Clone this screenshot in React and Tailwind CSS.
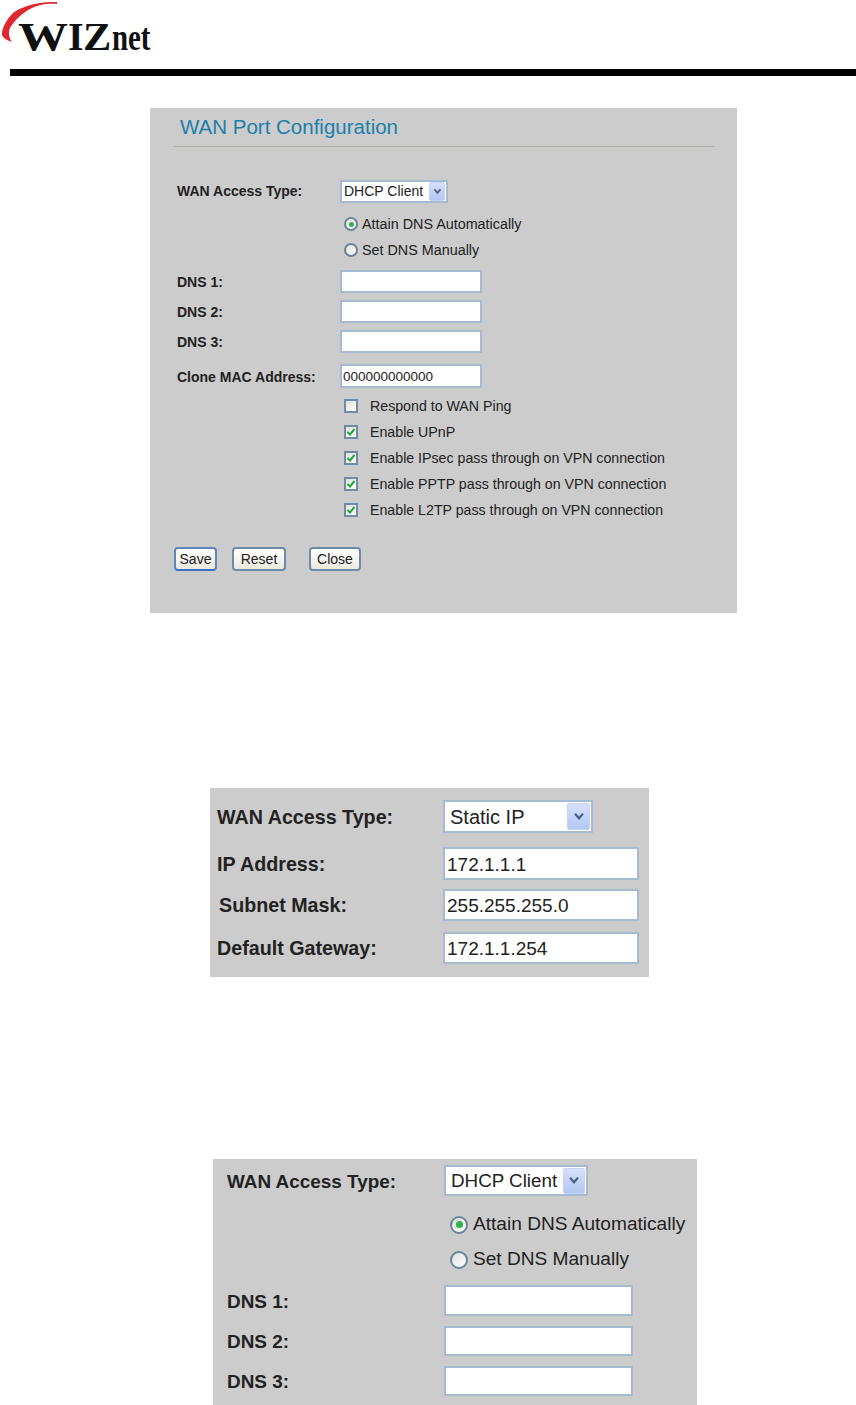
const sans = 'font-["Liberation_Sans",Arial,sans-serif]';

function Chevron({ box, icon }) {
  return (
    <div className={`${box} flex items-center justify-center rounded-[2px] bg-gradient-to-b from-[#d5e0fb] to-[#b3c7f5] border border-[#c5d3f5]`}>
      <svg viewBox="0 0 10 8" className={icon} fill="none" stroke="#4d6185" strokeWidth="2">
        <path d="M1.5 1.5 5 5.500 8.500 1.500" />
      </svg>
    </div>
  );
}

function SelectBox({ value, cls, box, icon, text }) {
  return (
    <div className={`${cls} flex items-center justify-between bg-white border-2 border-[#a6bbd2] pr-[1px]`}>
      <span className={text}>{value}</span>
      <Chevron box={box} icon={icon} />
    </div>
  );
}

function Radio({ checked, size, dot }) {
  return (
    <span className={`${size} flex-shrink-0 flex items-center justify-center rounded-full border-2 border-[#6a8499] bg-gradient-to-br from-[#dfdfdb] to-white`}>
      {checked && <span className={`${dot} rounded-full bg-[#2fb14a]`} />}
    </span>
  );
}

function Check({ checked }) {
  return (
    <span className="w-[14px] h-[14px] flex-shrink-0 flex items-center justify-center border-2 border-[#6f8ba5] bg-gradient-to-br from-[#e0e0da] to-white">
      {checked && (
        <svg viewBox="0 0 10 10" className="w-[10px] h-[10px]" fill="none" stroke="#22a83a" strokeWidth="2">
          <path d="M1.5 5 4 7.500 8.500 2" />
        </svg>
      )}
    </span>
  );
}

function Btn({ children, cls }) {
  return (
    <button className={`${cls} h-[24px] text-[14px] text-[#222] rounded-[4px] border-2 bg-gradient-to-b from-white to-[#ebe9df] flex items-center justify-center`}>
      {children}
    </button>
  );
}

function TextBox({ cls, value = '' }) {
  return (
    <input
      readOnly
      value={value}
      className={`${cls} bg-white border-2 border-[#a6bbd2] text-[#222] outline-none`}
    />
  );
}

function FirstPanel() {
  const labelCls = 'w-[190px] flex-shrink-0 whitespace-nowrap pl-[27px] text-[14px] font-bold text-[#222]';
  return (
    <div className={`${sans} ml-[150px] mt-[32px] w-[587px] bg-[#cccccc] pb-[42px]`}>
      <div className="ml-[23px] w-[542px] h-[39px] border-b border-[#b3aea6] pl-[7px] flex items-center">
        <h2 className="text-[20.5px] text-[#1b7fab]">WAN Port Configuration</h2>
      </div>

      <div className="mt-[33px] flex items-center h-[23px]">
        <div className={labelCls}>WAN Access Type:</div>
        <SelectBox
          value="DHCP Client"
          cls="w-[108px] h-[23px]"
          box="w-[16px] h-[19px]"
          icon="w-[9px] h-[7px]"
          text="pl-[2px] text-[14px] text-[#222]"
        />
      </div>

      <div className="mt-[8px]">
        {[['Attain DNS Automatically', true], ['Set DNS Manually', false]].map(([t, on]) => (
          <div key={t} className="ml-[194px] h-[26px] flex items-center gap-[4px] text-[14.35px] text-[#222]">
            <Radio checked={on} size="w-[14px] h-[14px]" dot="w-[5px] h-[5px]" />
            <span className="pt-[2px]">{t}</span>
          </div>
        ))}
      </div>

      {['DNS 1:', 'DNS 2:', 'DNS 3:'].map(l => (
        <div key={l} className="mt-[7px] flex items-center h-[23px]">
          <div className={`${labelCls} pt-[2px]`}>{l}</div>
          <TextBox cls="w-[142px] h-[23px] text-[14px] px-[2px]" />
        </div>
      ))}

      <div className="mt-[11px] flex items-center h-[24px]">
        <div className={`${labelCls} pt-[2px]`}>Clone MAC Address:</div>
        <TextBox cls="w-[142px] h-[24px] text-[13.5px] pl-[1px] pr-[2px]" value="000000000000" />
      </div>

      <div className="mt-[5px]">
        {[
          ['Respond to WAN Ping', false],
          ['Enable UPnP', true],
          ['Enable IPsec pass through on VPN connection', true],
          ['Enable PPTP pass through on VPN connection', true],
          ['Enable L2TP pass through on VPN connection', true],
        ].map(([t, on]) => (
          <div key={t} className="ml-[194px] h-[26px] flex items-center gap-[12px] text-[14.2px] text-[#222]">
            <Check checked={on} />
            <span className="pt-[2px]">{t}</span>
          </div>
        ))}
      </div>

      <div className="mt-[24px] ml-[24px] flex">
        <Btn cls="w-[43px] border-[#5f86b8] border-b-[#3b6fc7]">Save</Btn>
        <Btn cls="w-[54px] ml-[15px] border-[#6d8ba6]">Reset</Btn>
        <Btn cls="w-[52px] ml-[23px] border-[#6d8ba6]">Close</Btn>
      </div>
    </div>
  );
}

function StaticPanel() {
  const labelCls = 'w-[233px] flex-shrink-0 pl-[7px] pt-[2px] text-[19.7px] font-bold text-[#222]';
  const field = 'w-[196px] text-[19px] px-[2px] pt-[2px]';
  return (
    <div className={`${sans} ml-[210px] mt-[175px] w-[439px] bg-[#cccccc] pt-[12px] pb-[13px]`}>
      <div className="flex items-center h-[33px]">
        <div className={labelCls}>WAN Access Type:</div>
        <SelectBox
          value="Static IP"
          cls="w-[150px] h-[33px]"
          box="w-[23px] h-[27px]"
          icon="w-[12px] h-[9px]"
          text="pl-[5px] text-[20px] text-[#222]"
        />
      </div>
      <div className="mt-[14px] flex items-center h-[33px]">
        <div className={labelCls}>IP Address:</div>
        <TextBox cls={`${field} h-[33px]`} value="172.1.1.1" />
      </div>
      <div className="mt-[9px] flex items-center h-[32px]">
        <div className={labelCls}><span className="ml-[2px]">Subnet Mask:</span></div>
        <TextBox cls={`${field} h-[32px]`} value="255.255.255.0" />
      </div>
      <div className="mt-[11px] flex items-center h-[32px]">
        <div className={labelCls}>Default Gateway:</div>
        <TextBox cls={`${field} h-[32px]`} value="172.1.1.254" />
      </div>
    </div>
  );
}

function DhcpPanel() {
  const labelCls = 'w-[231px] flex-shrink-0 pl-[14px] pt-[3px] text-[18.9px] font-bold text-[#222]';
  return (
    <div className={`${sans} ml-[213px] mt-[182px] w-[484px] bg-[#cccccc] pt-[6px] pb-[9px]`}>
      <div className="flex items-center h-[31px]">
        <div className={labelCls}>WAN Access Type:</div>
        <SelectBox
          value="DHCP Client"
          cls="w-[144px] h-[31px]"
          box="w-[22px] h-[26px]"
          icon="w-[12px] h-[9px]"
          text="pl-[5px] pt-[2px] text-[18.8px] text-[#222]"
        />
      </div>
      <div className="mt-[11px]">
        {[['Attain DNS Automatically', true], ['Set DNS Manually', false]].map(([t, on]) => (
          <div key={t} className="ml-[237px] h-[35px] flex items-center gap-[5px] text-[19.1px] text-[#222]">
            <Radio checked={on} size="w-[18px] h-[18px]" dot="w-[7px] h-[7px]" />
            <span>{t}</span>
          </div>
        ))}
      </div>
      <div className="mt-[8px] flex items-center h-[31px]">
        <div className={labelCls}>DNS 1:</div>
        <TextBox cls="w-[189px] h-[31px]" />
      </div>
      <div className="mt-[10px] flex items-center h-[30px]">
        <div className={labelCls}>DNS 2:</div>
        <TextBox cls="w-[189px] h-[30px]" />
      </div>
      <div className="mt-[10px] flex items-center h-[30px]">
        <div className={labelCls}>DNS 3:</div>
        <TextBox cls="w-[189px] h-[30px]" />
      </div>
    </div>
  );
}

function Logo() {
  return (
    <>
      <svg viewBox="0 0 60 46" className="absolute left-0 top-0 w-[60px] h-[46px]">
        <path d="M12 42C6 40 1 37 2 32 4 24 8 18 13 13 20 7 38 1 57 2L57 4C46 3 37 5 30 9 22 13 14 21 10 28 8 33 9 38 12 42Z" fill="#e0262e" />
      </svg>
      <div className='absolute left-[18px] top-[15px] flex items-baseline font-["Liberation_Serif",serif] font-bold text-[40px] leading-[44px] text-[#111]'>
        <span className="inline-block w-[50px] origin-left scale-x-[1.25]">W</span>
        <span className="inline-block w-[15px]">I</span>
        <span className="inline-block w-[29px] origin-left scale-x-[1.06]">Z</span>
        <span className="inline-block w-[37px] origin-left scale-x-[0.78] text-[37px]">net</span>
      </div>
    </>
  );
}

export default function App() {
  return (
    <div className="w-[856px] h-[1405px] overflow-hidden bg-white">
      <header className="h-[69px] relative">
        <Logo />
      </header>
      <div className="ml-[10px] h-[7px] bg-black" />
      <FirstPanel />
      <StaticPanel />
      <DhcpPanel />
    </div>
  );
}
